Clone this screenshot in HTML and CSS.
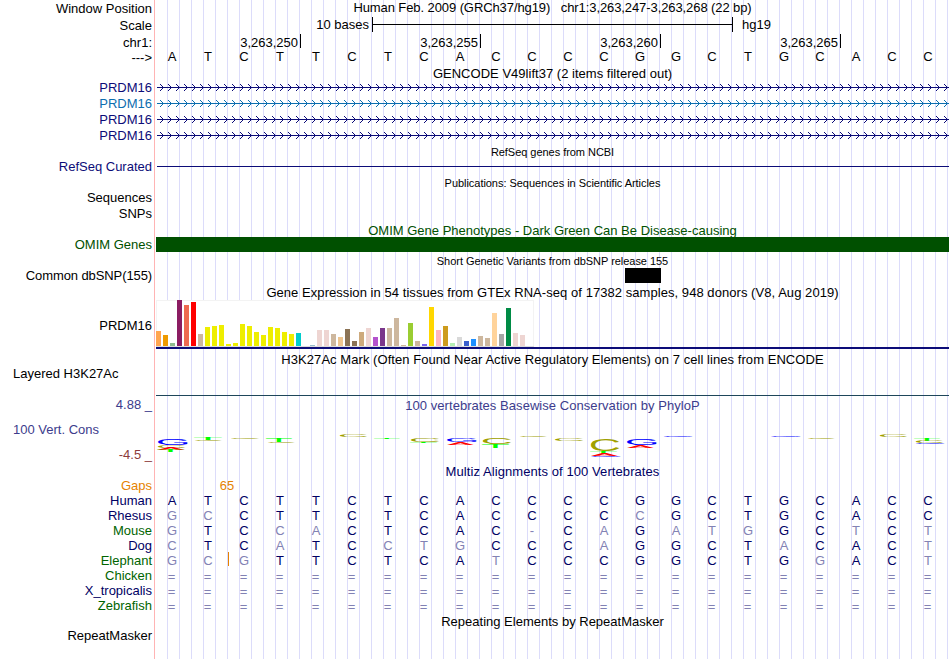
FILE: index.html
```html
<!DOCTYPE html>
<html lang="en">
<head>
    <meta charset="UTF-8">
    <meta name="viewport" content="width=device-width, initial-scale=1.0">
    <title>Human chr1:3,263,247-3,263,268 - Genome Browser</title>
    <link rel="stylesheet" href="styles.css">
</head>
<body>
    <div class="browser">
        <!-- Ruler -->
        <div class="row row-position">
            <div class="label">Window Position</div>
            <div class="track title"><span class="t-position">Human Feb. 2009 (GRCh37/hg19) &nbsp; chr1:3,263,247-3,263,268 (22 bp)</span></div>
        </div>
        <div class="row row-scale">
            <div class="label">Scale</div>
            <div class="track scale">
                <span class="scale-size">10 bases</span>
                <div class="scale-bar"></div>
                <span>hg19</span>
            </div>
        </div>
        <div class="row row-chrom">
            <div class="label">chr1:</div>
            <div class="track ticks">
                <div class="tick first">3,263,250</div>
                <div class="tick">3,263,255</div>
                <div class="tick">3,263,260</div>
                <div class="tick">3,263,265</div>
            </div>
        </div>
        <div class="row row-bases">
            <div class="label">---&gt;</div>
            <div class="track bases" data-seq="ATCTTCTCACCCCGGCTGCACC"></div>
        </div>

        <!-- GENCODE -->
        <div class="row h14">
            <div class="label"></div>
            <div class="track title"><span class="t-gencode">GENCODE V49lift37 (2 items filtered out)</span></div>
        </div>
        <div class="row h16 gene">
            <div class="label">PRDM16</div>
            <div class="track intron"></div>
        </div>
        <div class="row h16 gene light">
            <div class="label">PRDM16</div>
            <div class="track intron"></div>
        </div>
        <div class="row h16 gene">
            <div class="label">PRDM16</div>
            <div class="track intron"></div>
        </div>
        <div class="row h16 gene">
            <div class="label">PRDM16</div>
            <div class="track intron"></div>
        </div>

        <!-- RefSeq -->
        <div class="row h15">
            <div class="label"></div>
            <div class="track title small">RefSeq genes from NCBI</div>
        </div>
        <div class="row h16 gene">
            <div class="label">RefSeq Curated</div>
            <div class="track"><div class="refseq-line"></div></div>
        </div>

        <!-- Publications -->
        <div class="row h15">
            <div class="label"></div>
            <div class="track title small">Publications: Sequences in Scientific Articles</div>
        </div>
        <div class="row h16">
            <div class="label">Sequences</div>
            <div class="track"></div>
        </div>
        <div class="row h17">
            <div class="label">SNPs</div>
            <div class="track"></div>
        </div>

        <!-- OMIM -->
        <div class="row h14 omim">
            <div class="label"></div>
            <div class="track title"><span class="t-omim">OMIM Gene Phenotypes - Dark Green Can Be Disease-causing</span></div>
        </div>
        <div class="row h16 omim">
            <div class="label">OMIM Genes</div>
            <div class="track"><div class="omim-bar"></div></div>
        </div>

        <!-- dbSNP -->
        <div class="row h15">
            <div class="label"></div>
            <div class="track title small">Short Genetic Variants from dbSNP release 155</div>
        </div>
        <div class="row h17">
            <div class="label t-dbsnp">Common dbSNP(155)</div>
            <div class="track"><div class="snp"></div></div>
        </div>

        <!-- GTEx -->
        <div class="row h15">
            <div class="label"></div>
            <div class="track title"><span class="t-gtex">Gene Expression in 54 tissues from GTEx RNA-seq of 17382 samples, 948 donors (V8, Aug 2019)</span></div>
        </div>
        <div class="row row-gtex">
            <div class="label">PRDM16</div>
            <div class="track">
                <div class="gtex" id="gtex"></div>
                <div class="gtex-gene"></div>
            </div>
        </div>

        <!-- H3K27Ac -->
        <div class="row h14">
            <div class="label"></div>
            <div class="track title"><span class="t-h3k">H3K27Ac Mark (Often Found Near Active Regulatory Elements) on 7 cell lines from ENCODE</span></div>
        </div>
        <div class="row row-h3k">
            <div class="label left">Layered H3K27Ac</div>
            <div class="track"><div class="h3k-line"></div></div>
        </div>

        <!-- Conservation -->
        <div class="row row-phylop">
            <div class="label phylop-labels">
                <div class="high">4.88 _</div>
                <div class="left">100 Vert. Cons</div>
                <div class="low">-4.5 _</div>
            </div>
            <div class="track phylop">
                <div class="title"><span class="t-phylop">100 vertebrates Basewise Conservation by PhyloP</span></div>
                <svg id="logo" width="793" height="46" viewBox="156 418 793 46"></svg>
            </div>
        </div>

        <!-- Multiz -->
        <div class="row h14 species">
            <div class="label"></div>
            <div class="track title"><span class="t-multiz">Multiz Alignments of 100 Vertebrates</span></div>
        </div>
        <div class="row h15 gaps">
            <div class="label">Gaps</div>
            <div class="track"><div class="gap-size">65</div></div>
        </div>
        <div class="row h15 species">
            <div class="label">Human</div>
            <div class="track bases" data-seq="ATCTTCTCACCCCGGCTGCACC"></div>
        </div>
        <div class="row h15 species">
            <div class="label">Rhesus</div>
            <div class="track bases" data-seq="GCCTTCTCACCCCCGCTGCACC"></div>
        </div>
        <div class="row h15 species alt">
            <div class="label">Mouse</div>
            <div class="track bases" data-seq="GTCCACTCAC-CAGATGGCTCT"></div>
        </div>
        <div class="row h15 species">
            <div class="label">Dog</div>
            <div class="track bases" data-seq="CTCATCCTGCCCAGGCTACACT"></div>
        </div>
        <div class="row h15 species alt">
            <div class="label">Elephant</div>
            <div class="track bases inserted" data-seq="GCGTTCTCATCCCGGCTGGACT"></div>
        </div>
        <div class="row h15 species alt">
            <div class="label">Chicken</div>
            <div class="track bases" data-seq="======================"></div>
        </div>
        <div class="row h15 species">
            <div class="label">X_tropicalis</div>
            <div class="track bases" data-seq="======================"></div>
        </div>
        <div class="row h15 species alt">
            <div class="label">Zebrafish</div>
            <div class="track bases" data-seq="======================"></div>
        </div>

        <!-- RepeatMasker -->
        <div class="row h15 row-repeat-title">
            <div class="label"></div>
            <div class="track title">Repeating Elements by RepeatMasker</div>
        </div>
        <div class="row row-last">
            <div class="label">RepeatMasker</div>
            <div class="track"></div>
        </div>
    </div>

    <script>
        const human = "ATCTTCTCACCCCGGCTGCACC";
        const svgNS = "http://www.w3.org/2000/svg";

        // Base letters, the ones that differ from human are dimmed
        document.querySelectorAll(".bases").forEach(track => {
            [...track.dataset.seq].forEach((base, i) => {
                const cell = document.createElement("span");
                cell.className = "base";
                if (base !== human[i]) cell.classList.add("diff");
                if (base === "=") cell.classList.add("none");
                cell.textContent = base;
                track.appendChild(cell);
            });
        });

        // Arrows along the introns
        document.querySelectorAll(".intron").forEach(track => {
            const svg = document.createElementNS(svgNS, "svg");
            svg.setAttribute("width", 793);
            svg.setAttribute("height", 16);
            let d = "M1 7.5H793";
            for (let x = 4; x < 792; x += 8) {
                d += `M${x} 4.5h1m0 1h1m0 1h1m0 1h1m-2 1h1m-2 1h1m-2 1h1`;
            }
            const path = document.createElementNS(svgNS, "path");
            path.setAttribute("d", d);
            svg.appendChild(path);
            track.appendChild(svg);
        });

        // GTEx: height and color of each tissue
        const tissues = [
            [15, "#ffa54f"], [11, "#ee9a00"], [3, "#8fbc8f"], [46, "#8b1c62"], [41, "#ee6a50"], [44, "#ff0000"],
            [12, "#cdb79e"], [19, "#eeee00"], [20, "#eeee00"], [21, "#eeee00"], [2, "#eeee00"], [3, "#eeee00"],
            [22, "#eeee00"], [20, "#eeee00"], [14, "#eeee00"], [11, "#eeee00"], [19, "#eeee00"], [18, "#eeee00"],
            [14, "#eeee00"], [12, "#eeee00"], [13, "#00cdcd"], [0, "#ee82ee"], [1, "#9ac0cd"], [16, "#eed5d2"],
            [16, "#eed5d2"], [12, "#cdb79e"], [9, "#eec591"], [17, "#8b7355"], [5, "#8b7355"], [14, "#cdaa7d"],
            [18, "#eed5d2"], [9, "#b452cd"], [18, "#7a378b"], [18, "#cdb79e"], [28, "#cdb79e"], [1, "#cdb79e"],
            [23, "#9acd32"], [5, "#cdb79e"], [2, "#7a67ee"], [39, "#ffd700"], [16, "#ffb6c1"], [20, "#cd9b1d"],
            [3, "#b4eeb4"], [9, "#d9d9d9"], [5, "#3a5fcd"], [7, "#1e90ff"], [10, "#cdb79e"], [8, "#cdb79e"],
            [33, "#ffd39b"], [12, "#a6a6a6"], [38, "#008b45"], [13, "#eed5d2"], [11, "#eed5d2"], [0, "#ff00ff"]
        ];
        const gtex = document.getElementById("gtex");
        tissues.forEach(([height, color]) => {
            const bar = document.createElement("div");
            bar.className = "bar";
            bar.style.height = height + "px";
            bar.style.background = color;
            gtex.appendChild(bar);
        });

        // Conservation logo: letter, left, top, width, height
        const logo = [
            ["G", 158, 438, 30, 7], ["C", 158, 445, 27, 3], ["A", 157, 448, 28, 2], ["T", 157, 449.5, 27, 2.5],
            ["T", 194, 438, 28, 2], ["C", 195, 440, 27, 1],
            ["C", 231, 438, 28, 1],
            ["T", 266, 438, 26, 4], ["C", 268, 442, 27, 1],
            ["C", 340, 435, 27, 2],
            ["T", 374, 438, 26, 1],
            ["C", 411, 438, 28, 4], ["T", 410, 442, 27, 1],
            ["G", 447, 438, 30, 4], ["A", 447, 442, 27, 3],
            ["C", 483, 438, 28, 6], ["T", 482, 444, 27, 4],
            ["C", 520, 436, 27, 1],
            ["C", 555, 438, 28, 3],
            ["C", 591, 439, 28, 12], ["T", 590, 451, 27, 3], ["A", 591, 454, 27, 2], ["G", 591, 456, 30, 1],
            ["G", 627, 438, 30, 7], ["A", 627, 445, 27, 3],
            ["G", 664, 436, 29, 1],
            ["G", 771, 436, 30, 1],
            ["C", 808, 438, 27, 1],
            ["C", 880, 435, 27, 2],
            ["T", 914, 438, 26, 3], ["C", 916, 441, 27, 2], ["G", 916, 443, 29, 1]
        ];
        // ink box of the letters at 100px: left, width, height, depth
        const ink = { A: [0, 67, 69, 0], C: [5, 63, 71, 1], G: [5, 67, 71, 1], T: [2, 57, 69, 0] };
        const svgLogo = document.getElementById("logo");
        logo.forEach(([letter, x, y, w, h]) => {
            const [left, width, height, depth] = ink[letter];
            const text = document.createElementNS(svgNS, "text");
            const sx = w / width;
            const sy = h / height;
            text.setAttribute("class", "logo-" + letter);
            text.setAttribute("transform", `translate(${x - left * sx} ${y + h - depth * sy}) scale(${sx} ${sy})`);
            text.textContent = letter;
            svgLogo.appendChild(text);
        });
    </script>
</body>
</html>
```
FILE: styles.css
```css
body {
    margin: 0;
    background: #fff;
    font-family: "Liberation Sans", Arial, sans-serif;
    font-size: 13px;
    line-height: 15px;
    color: #000;
}
.browser {
    width: 949px;
    height: 659px;
    overflow: hidden;
    background: linear-gradient(#ffb4b4, #ffb4b4) 154px 0 / 1px 100% no-repeat;
}
.row {
    display: flex;
}
.label {
    width: 152px;
    margin-right: 4px;
    flex-shrink: 0;
    text-align: right;
    white-space: nowrap;
}
.track {
    width: 793px;
    flex-shrink: 0;
    white-space: nowrap;
    background: linear-gradient(to right, #dcdcfa 1px, transparent 1px) 11px 0 / 12px 100%;
}
.title {
    text-align: center;
}
.small {
    font-size: 11px;
    line-height: 17px;
    letter-spacing: -0.04px;
}
.left {
    text-align: left;
    box-sizing: border-box;
    padding-left: 13px;
}
.h14 { height: 14px; }
.h15 { height: 15px; }
.h16 { height: 16px; }
.h17 { height: 17px; }

/* title tracking */
.t-position { letter-spacing: -0.09px; }
.t-dbsnp { letter-spacing: -0.1px; }
.t-gencode { letter-spacing: 0.02px; }
.t-gtex, .t-h3k, .t-phylop { letter-spacing: 0.055px; }
.t-multiz { letter-spacing: 0.08px; }

/* ruler */
.row-position {
    height: 17px;
}
.row-position .label, .row-scale .label, .row-bases .label {
    padding-top: 1px;
}
.row-scale {
    height: 17px;
}
.scale {
    display: flex;
}
.scale-size {
    width: 213px;
    text-align: right;
}
.scale-bar {
    width: 359px;
    height: 15px;
    margin: 0 9px 0 3px;
    border: 1px solid #000;
    border-width: 0 1px;
    background: linear-gradient(#000, #000) 0 7px / 100% 1px no-repeat;
}
.row-chrom {
    height: 15px;
}
.row-chrom .label, .ticks {
    line-height: 17px;
}
.ticks {
    display: flex;
}
.tick {
    width: 180px;
    height: 14px;
    box-sizing: border-box;
    padding-right: 2px;
    border-right: 1px solid #000;
    text-align: right;
}
.tick.first {
    width: 145px;
}
.row-bases {
    height: 17px;
}
.bases {
    display: flex;
}
.base {
    width: 36px;
    flex-shrink: 0;
    text-align: center;
}
.base:first-child {
    width: 32px;
    margin-right: 2px;
}

/* genes */
.gene {
    color: #0c0c78;
}
.gene.light {
    color: #0c6eaf;
}
.intron svg {
    display: block;
}
.intron path {
    stroke: currentColor;
    stroke-width: 1;
    fill: none;
    shape-rendering: crispEdges;
}
.refseq-line {
    height: 1px;
    margin: 7px 0 0 1px;
    background: #0c0c78;
}
.omim {
    color: #005000;
}
.omim-bar {
    height: 15px;
    background: #005000;
}
.snp {
    width: 36px;
    height: 15px;
    margin-left: 469px;
    background: #000;
}

/* expression */
.row-gtex {
    height: 52px;
}
.row-gtex .label {
    padding-top: 18px;
}
.gtex {
    display: flex;
    align-items: flex-end;
    gap: 2px;
    width: 378px;
    height: 47px;
    box-sizing: border-box;
    border-bottom: 1px solid #dcdcdc;
    background: #fff;
    box-shadow: inset 0 1px #f3f3f3, inset -1px 0 #f3f3f3, inset 1px 0 #f3f3f3;
}
.bar {
    width: 5px;
    flex-shrink: 0;
}
.gtex-gene {
    height: 2px;
    background: #0c0c78;
}

/* histone marks */
.row-h3k {
    height: 31px;
}
.h3k-line {
    height: 1px;
    margin-top: 29px;
    background: #1e465a;
}

/* conservation */
.row-phylop {
    height: 67px;
}
.phylop-labels {
    display: flex;
    flex-direction: column;
    gap: 10px;
    color: #3c3c8c;
}
.phylop-labels .low {
    color: #8c3c3c;
}
.phylop .title {
    height: 20px;
    padding-top: 1px;
    color: #3c3c8c;
}
#logo {
    display: block;
    font-size: 100px;
}
.logo-A { fill: #f00; }
.logo-C { fill: #a0a000; }
.logo-G { fill: #00f; }
.logo-T { fill: #0f0; }

/* alignments */
.species {
    color: #000064;
}
.species.alt .label {
    color: #006400;
}
.base.diff {
    color: #8282b4;
}
.base.none {
    padding: 1px 1px 0 0;
    box-sizing: border-box;
}
.gaps {
    color: #e68200;
}
.gap-size {
    width: 142px;
    text-align: center;
}
.inserted {
    position: relative;
}
.inserted::after {
    content: "";
    position: absolute;
    left: 72px;
    top: -1px;
    width: 1px;
    height: 14px;
    background: #e68200;
}
.row-repeat-title .title {
    padding-top: 1px;
    height: 14px;
}
.row-last {
    height: 31px;
}
```
